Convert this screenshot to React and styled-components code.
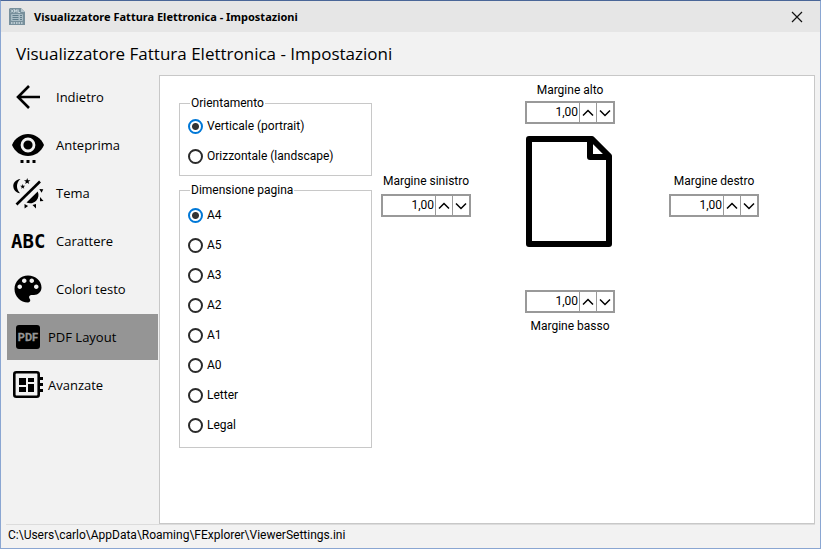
import React, { useState } from "react";
import styled, { createGlobalStyle } from "styled-components";

const GlobalStyle = createGlobalStyle`
  *, *::before, *::after { box-sizing: border-box; }
  body { margin: 0; }
  button, input { font: inherit; color: inherit; }
`;

const Window = styled.div`
  display: flex;
  flex-direction: column;
  min-height: 100vh;
  border: 1px solid #8aa6d2;
  border-top-color: #4a6698;
  background: #f2f2f2;
  color: #000;
  font-family: Roboto, "Open Sans", sans-serif;
  font-size: 12px;
  line-height: 16px;
`;

const TitleBar = styled.header`
  display: flex;
  align-items: center;
  height: 31px;
  padding: 0 17px 0 8px;
  gap: 9px;
  background: #e6e6e6;
`;

const WindowTitle = styled.span`
  flex: 1;
  font-family: "Noto Sans", sans-serif;
  font-size: 11px;
  font-weight: 700;
`;

const CloseButton = styled.button`
  display: flex;
  padding: 0;
  border: 0;
  background: none;
`;

const Heading = styled.h1`
  margin: 0;
  padding: 10px 15px 9px;
  font-family: "Open Sans", "Noto Sans", sans-serif;
  font-size: 17px;
  line-height: 24px;
  font-weight: 400;
`;

const Body = styled.div`
  display: grid;
  grid-template-columns: 151px 1fr;
  flex: 1;
  column-gap: 1px;
  padding: 0 5px 0 6px;
`;

const Sidebar = styled.nav`
  display: flex;
  flex-direction: column;
  gap: 2px;
  margin-top: -1px;
`;

const NavButton = styled.button`
  display: flex;
  align-items: center;
  gap: ${(p) => (p.$compact ? 4 : 12)}px;
  height: 46px;
  padding: 0 5px;
  border: 0;
  background: ${(p) => (p.$active ? "#959595" : "transparent")};
  font-family: "Open Sans", "Noto Sans", sans-serif;
  font-size: 13px;
  text-align: left;
`;

const NavIcon = styled.svg`
  flex: none;
  width: 32px;
  height: 32px;
  overflow: visible;
`;

const Panel = styled.main`
  display: flex;
  align-items: flex-start;
  gap: 9px;
  padding: 6px 19px;
  border: 1px solid #c8c8c8;
  background: #fff;
`;

const Groups = styled.form`
  display: flex;
  flex-direction: column;
  flex: none;
  gap: 6px;
  width: 193px;
  padding-top: 13px;
`;

const Group = styled.fieldset`
  display: flex;
  flex-direction: column;
  gap: 14px;
  margin: 0;
  padding: ${(p) => (p.$roomy ? "9px 8px 14px" : "7px 8px 11px")};
  border: 1px solid #c8c8c8;
`;

const Legend = styled.legend`
  margin-left: 2px;
  padding: 0 1px;
`;

const RadioLabel = styled.label`
  display: flex;
  align-items: center;
  gap: 4px;
`;

const Radio = styled.input`
  appearance: none;
  width: 15px;
  height: 15px;
  margin: 0;
  border: 2px solid #2b2b2b;
  border-radius: 50%;
  background: #fff;
  &:checked {
    border-color: #0078d7;
    background: radial-gradient(circle, #333 3px, #fff 4px);
  }
`;

const MarginGrid = styled.div`
  display: grid;
  grid-template-columns: repeat(3, 90px);
  grid-template-areas: ". top ." "left page right" ". bottom .";
  align-items: center;
  justify-items: center;
  column-gap: 54px;
`;

const MarginField = styled.div`
  display: flex;
  flex-direction: ${(p) => (p.$area === "bottom" ? "column-reverse" : "column")};
  align-items: center;
  gap: ${(p) => (p.$area === "top" ? 3 : 5)}px;
  grid-area: ${(p) => p.$area};
  margin-top: ${(p) => (p.$area === "bottom" ? 24 : 0)}px;
  white-space: nowrap;
`;

const Spinner = styled.div`
  display: flex;
  width: 90px;
  height: 23px;
  border: 2px solid #999;
  background: #fff;
`;

const SpinnerInput = styled.input`
  flex: 1;
  min-width: 0;
  padding: 0 1px 1px;
  border: 0;
  outline: 0;
  background: none;
  text-align: right;
`;

const StepButton = styled.button`
  display: flex;
  align-items: center;
  justify-content: center;
  width: 17px;
  padding: 0;
  border: 0;
  border-left: 1px solid #999;
  background: none;
`;

const PageIcon = styled.svg`
  grid-area: page;
  width: 88px;
  height: 112px;
  margin: 12px 0 18px;
`;

const StatusBar = styled.footer`
  margin: 0 5px;
  padding: 2px 3px 5px 2px;
  border-top: 1px solid #dcdcdc;
`;

function DocumentIcon() {
  return (
    <svg width="16" height="17" viewBox="0 0 16 17" aria-hidden="true">
      <path d="M1 0h11l4 4v13H0V1z" fill="#78909c" />
      <path d="M12 0v4h4z" fill="#b5c6ce" />
      <path d="M2 1.5l2.5 3M4.500 1.500L2 4.500M5.500 4.500v-3l1.200 2 1.200-2v3M9.200 1.500v3h2" stroke="#cfdce2" strokeWidth=".9" fill="none" />
      <rect x="2" y="6" width="12" height="7" rx="1" fill="#a9bcc5" />
      <path d="M3.500 7.500h6M3.500 9.500h6M3.500 11.500h6M11 7.500h2M11 9.500h2M11 11.500h2" stroke="#607d8b" />
      <path d="M2 15h12" stroke="#cfdce2" strokeWidth="1.500" strokeDasharray="1.500 1" />
    </svg>
  );
}

const icons = {
  back: (
    <path d="M28 16H6M17 5L6 16l11 11" fill="none" stroke="#000" strokeWidth="2.600" />
  ),
  preview: (
    <>
      <path d="M0 16C3 9 9 5 16 5s13 4 16 11c-3 7-9 11-16 11S3 23 0 16z" />
      <circle cx="16" cy="16" r="6" fill="none" stroke="#f2f2f2" strokeWidth="2.800" />
      <path d="M8.500 31h3v3h-3zM14.500 31h3v3h-3zM20.500 31h3v3h-3z" />
    </>
  ),
  theme: (
    <>
      <path d="M4.500 27.500L28 4.500" stroke="#000" strokeWidth="2.600" />
      <path d="M8.500 2C3.500 2.500 1 6 1.300 9.500 1.600 13 4 15.800 8 16.300 4 12 3.800 6 8.500 2z" />
      <path d="M15.200 1l.8 2.200 2.400.1-1.900 1.500.7 2.300-2-1.300-2 1.300.7-2.300-1.900-1.500 2.400-.1zM10.700 7l.6 1.700 1.900.1-1.500 1.100.5 1.800-1.500-1-1.500 1 .5-1.800-1.500-1.100 1.900-.1z" />
      <path d="M14.500 25.500L25.700 14.500c1.500 3.500.8 6.500-1.300 8.900-2.600 2.800-6.400 3.600-9.900 2.100z" />
      <path d="M27.300 12l4 .2-1.700 3.600zM28 20l3.500 4-3.500.2zM12.500 27l3.600 2-3.500 2.500zM24 27v4.500L20.500 28z" />
    </>
  ),
  font: (
    <text x="-1" y="23" fontFamily="DejaVu Sans Mono, monospace" fontWeight="700" fontSize="19">
      ABC
    </text>
  ),
  colors: (
    <path
      transform="translate(-2 -2) scale(1.500)"
      d="M12 3c-4.970 0-9 4.030-9 9s4.030 9 9 9c.83 0 1.500-.67 1.500-1.500 0-.39-.15-.74-.39-1.010-.23-.26-.38-.61-.38-.99 0-.83.67-1.500 1.500-1.500H16c2.760 0 5-2.240 5-5 0-4.420-4.030-8-9-8zm-5.500 9c-.83 0-1.500-.67-1.500-1.500S5.670 9 6.500 9 8 9.670 8 10.500 7.330 12 6.500 12zm3-4C8.670 8 8 7.330 8 6.500S8.670 5 9.500 5s1.500.67 1.500 1.500S10.330 8 9.500 8zm5 0c-.83 0-1.500-.67-1.500-1.500S13.670 5 14.500 5s1.500.67 1.500 1.500S15.330 8 14.500 8zm3 4c-.83 0-1.500-.67-1.500-1.500S16.670 9 17.500 9s1.500.67 1.500 1.500-.67 1.500-1.500 1.500z"
    />
  ),
  pdf: (
    <>
      <rect x="4" y="4" width="24" height="24" rx="3" />
      <text x="16" y="20" textAnchor="middle" fill="#959595" stroke="#959595" strokeWidth=".3" fontFamily="Roboto, sans-serif" fontWeight="700" fontSize="11">
        PDF
      </text>
    </>
  ),
  advanced: (
    <>
      <rect x="2.300" y="3.300" width="24.400" height="24.400" rx="2" fill="none" stroke="#000" strokeWidth="2.600" />
      <path d="M7 9h7v7H7zM7 18h7v5H7zM16 9h6v4h-6zM16 15h6v8h-6zM27 8h4v3h-4zM27 14h4v3h-4zM27 20h4v3h-4z" />
    </>
  ),
};

const navItems = [
  { id: "back", label: "Indietro" },
  { id: "preview", label: "Anteprima" },
  { id: "theme", label: "Tema" },
  { id: "font", label: "Carattere" },
  { id: "colors", label: "Colori testo" },
  { id: "pdf", label: "PDF Layout", compact: true },
  { id: "advanced", label: "Avanzate", compact: true },
];

function RadioGroup({ name, title, options, roomy }) {
  const [value, setValue] = useState(options[0]);
  return (
    <Group $roomy={roomy}>
      <Legend>{title}</Legend>
      {options.map((option) => (
        <RadioLabel key={option}>
          <Radio type="radio" name={name} checked={value === option} onChange={() => setValue(option)} />
          {option}
        </RadioLabel>
      ))}
    </Group>
  );
}

function MarginInput({ area, label }) {
  const [value, setValue] = useState("1,00");
  const step = (delta) => {
    const next = Math.max(0, (parseFloat(value.replace(",", ".")) || 0) + delta);
    setValue(next.toFixed(2).replace(".", ","));
  };
  const id = `margin-${area}`;
  return (
    <MarginField $area={area}>
      <label htmlFor={id}>{label}</label>
      <Spinner>
        <SpinnerInput id={id} value={value} onChange={(e) => setValue(e.target.value)} />
        <StepButton type="button" aria-label="Aumenta" onClick={() => step(0.1)}>
          <svg width="12" height="8" viewBox="0 0 12 8">
            <path d="M1 6.500l5-5 5 5" fill="none" stroke="#000" strokeWidth="1.500" />
          </svg>
        </StepButton>
        <StepButton type="button" aria-label="Diminuisci" onClick={() => step(-0.1)}>
          <svg width="12" height="8" viewBox="0 0 12 8">
            <path d="M1 1.500l5 5 5-5" fill="none" stroke="#000" strokeWidth="1.500" />
          </svg>
        </StepButton>
      </Spinner>
    </MarginField>
  );
}

export default function App() {
  const [active, setActive] = useState("pdf");
  return (
    <>
      <GlobalStyle />
      <Window>
        <TitleBar>
          <DocumentIcon />
          <WindowTitle>Visualizzatore Fattura Elettronica - Impostazioni</WindowTitle>
          <CloseButton type="button" aria-label="Chiudi">
            <svg width="12" height="12" viewBox="0 0 12 12">
              <path d="M1 1l10 10M11 1L1 11" stroke="#111" strokeWidth="1.200" />
            </svg>
          </CloseButton>
        </TitleBar>
        <Heading>Visualizzatore Fattura Elettronica - Impostazioni</Heading>
        <Body>
          <Sidebar>
            {navItems.map((item) => (
              <NavButton
                key={item.id}
                type="button"
                $active={active === item.id}
                $compact={item.compact}
                onClick={() => setActive(item.id)}
              >
                <NavIcon viewBox="0 0 32 32" aria-hidden="true">{icons[item.id]}</NavIcon>
                {item.label}
              </NavButton>
            ))}
          </Sidebar>
          <Panel>
            <Groups>
              <RadioGroup
                name="orientation"
                title="Orientamento"
                options={["Verticale (portrait)", "Orizzontale (landscape)"]}
              />
              <RadioGroup
                name="size"
                title="Dimensione pagina"
                roomy
                options={["A4", "A5", "A3", "A2", "A1", "A0", "Letter", "Legal"]}
              />
            </Groups>
            <MarginGrid>
              <MarginInput area="top" label="Margine alto" />
              <MarginInput area="left" label="Margine sinistro" />
              <PageIcon viewBox="0 0 88 112" aria-hidden="true">
                <path
                  d="M3 3h63l17 17v88H3zM64 3v18h19"
                  fill="none"
                  stroke="#000"
                  strokeWidth="6"
                  strokeLinejoin="round"
                />
              </PageIcon>
              <MarginInput area="right" label="Margine destro" />
              <MarginInput area="bottom" label="Margine basso" />
            </MarginGrid>
          </Panel>
        </Body>
        <StatusBar>C:\Users\carlo\AppData\Roaming\FExplorer\ViewerSettings.ini</StatusBar>
      </Window>
    </>
  );
}
